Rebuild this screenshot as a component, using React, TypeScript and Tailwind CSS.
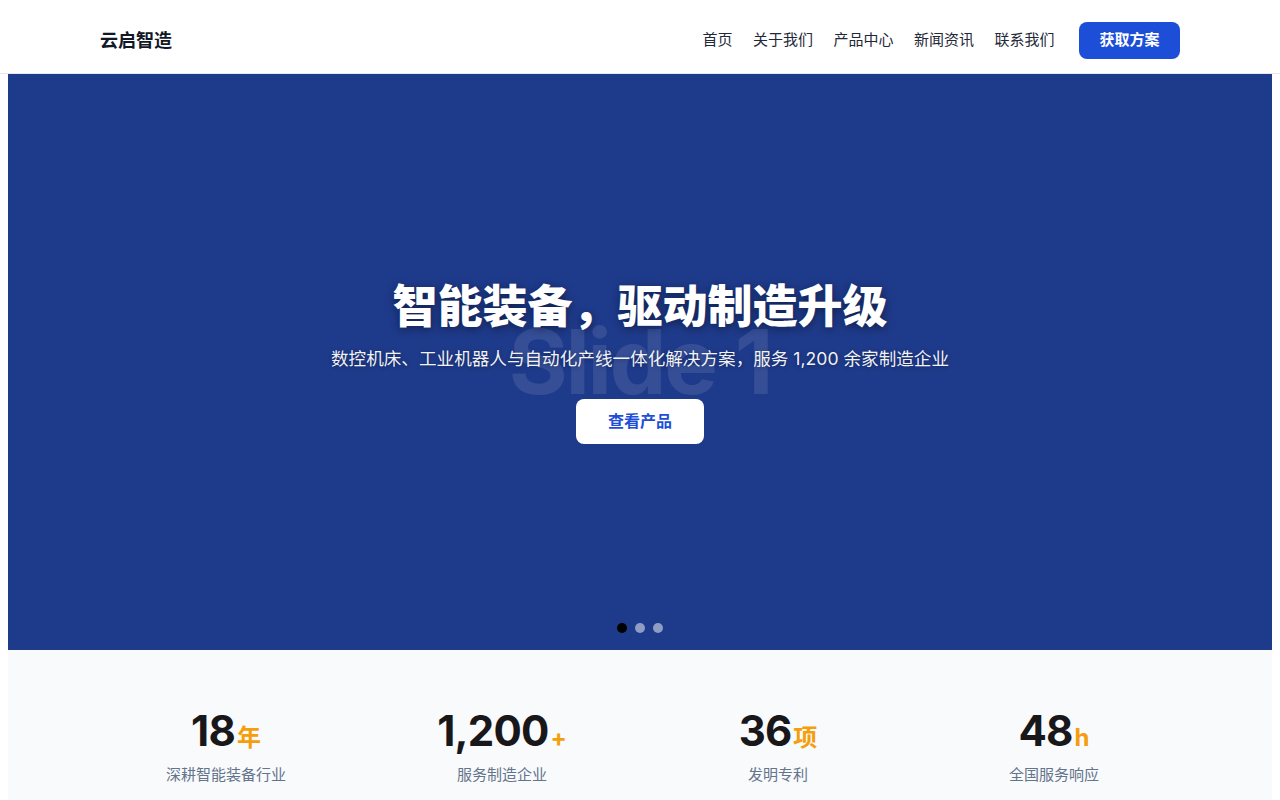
import React, { useState } from 'react';

const navItems = ['首页', '关于我们', '产品中心', '新闻资讯', '联系我们'];

const stats = [
  { value: '18', unit: '年', label: '深耕智能装备行业' },
  { value: '1,200', unit: '+', label: '服务制造企业' },
  { value: '36', unit: '项', label: '发明专利' },
  { value: '48', unit: 'h', label: '全国服务响应' },
];

const fontStack = "font-['Inter','Noto_Sans_CJK_SC',sans-serif]";

export default function App() {
  const [active, setActive] = useState(0);

  return (
    <div className={`${fontStack} min-h-screen bg-white text-[#1f2937]`}>
      {/* Header */}
      <header className="bg-white border-b border-[#e5e7eb]">
        <div className="max-w-[1080px] mx-auto pt-[22px] pb-[14px] flex items-center justify-between">
          <div className="text-[18px] font-bold text-[#111827]">云启智造</div>
          <nav className="flex items-center gap-[20.5px]">
            {navItems.map((item) => (
              <a key={item} href="#" className="text-[15px] text-[#1f2937] hover:text-[#1d4ed8]">
                {item}
              </a>
            ))}
            <button className="ml-1 bg-[#1d4ed8] text-white text-[15px] font-bold w-[101px] h-[37px] rounded-lg">
              获取方案
            </button>
          </nav>
        </div>
      </header>

      {/* Hero carousel */}
      <section className="mx-2 relative h-[576px] bg-[#1e3a8a] overflow-hidden flex items-center justify-center">
        <div className="absolute inset-0 flex items-center justify-center pointer-events-none select-none">
          <span className="text-[90px] font-bold tracking-tight text-white/10 leading-none">Slide {active + 1}</span>
        </div>

        <div className="relative flex flex-col items-center text-center text-white">
          <h1 className="text-[45px] font-extrabold leading-[1.2] [text-shadow:0_2px_8px_rgba(0,0,0,0.45)]">
            智能装备，驱动制造升级
          </h1>
          <p className="mt-[12px] text-[17.6px] leading-[1.5] text-white/95 [text-shadow:0_1px_4px_rgba(0,0,0,0.35)]">
            数控机床、工业机器人与自动化产线一体化解决方案，服务 1,200 余家制造企业
          </p>
          <button className="mt-[26px] w-[128px] h-[45px] bg-white rounded-lg text-[#1d4ed8] text-[16px] font-bold">
            查看产品
          </button>
        </div>

        <div className="absolute bottom-[17px] left-0 right-0 flex justify-center gap-2">
          {[0, 1, 2].map((i) => (
            <button
              key={i}
              onClick={() => setActive(i)}
              className={`w-[10px] h-[10px] rounded-full ${i === active ? 'bg-black' : 'bg-white/50'}`}
            />
          ))}
        </div>
      </section>

      {/* Stats */}
      <section className="mx-2 bg-[#f8fafc] pt-[56px] pb-12">
        <div className="max-w-[1080px] mx-auto grid grid-cols-4 gap-6">
          {stats.map((s) => (
            <div key={s.label} className="flex flex-col items-center">
              <div className="flex items-baseline">
                <span className="text-[42px] font-bold leading-[1.2] tracking-[-0.02em] text-[#18181b]">{s.value}</span>
                <span className="ml-[2px] text-[24px] font-bold text-[#f59e0b]">{s.unit}</span>
              </div>
              <div className="mt-[8px] text-[15px] text-[#64748b]">{s.label}</div>
            </div>
          ))}
        </div>
      </section>
    </div>
  );
}
